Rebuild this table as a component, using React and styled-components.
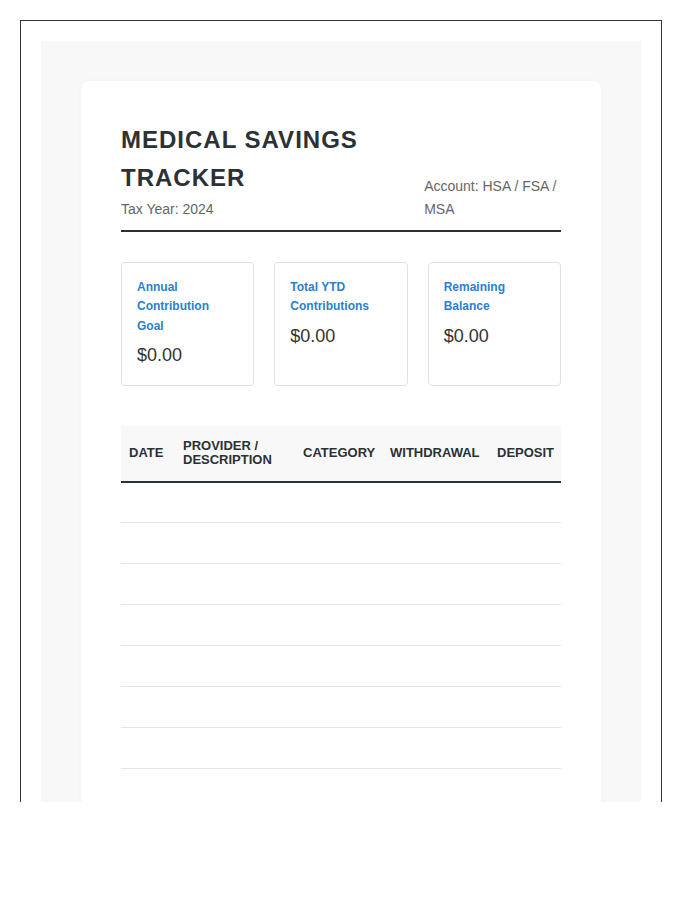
import React from "react";
import styled, { createGlobalStyle } from "styled-components";

const Global = createGlobalStyle`
  * { box-sizing: border-box; }
  body {
    margin: 0;
    background: #fff;
    font-family: "Liberation Sans", Arial, Helvetica, sans-serif;
    line-height: 1.6;
    color: #333;
  }
`;

const Frame = styled.div`
  margin: 20px 0 0 20px;
  width: 642px;
  height: 782px;
  border: 1px solid #333;
  border-bottom: none;
  overflow: hidden;
`;

const Backdrop = styled.div`
  margin: 20px;
  padding: 40px;
  background: #f8f8f8;
  min-height: 1000px;
`;

const Sheet = styled.div`
  background: #fff;
  border-radius: 8px;
  padding: 40px;
  box-shadow: 0 0 6px rgba(0, 0, 0, 0.03);
  min-height: 1000px;
`;

const Header = styled.header`
  display: flex;
  justify-content: space-between;
  align-items: flex-end;
  padding-bottom: 10px;
  border-bottom: 2px solid #2b3134;
  margin-bottom: 30px;
`;

const TitleBlock = styled.div``;

const Title = styled.h1`
  margin: 0;
  font-size: 24px;
  font-weight: 700;
  letter-spacing: 1px;
  text-transform: uppercase;
  color: #2b3134;
`;

const Meta = styled.div`
  font-size: 14px;
  color: #666;
`;

const Summary = styled.div`
  display: grid;
  grid-template-columns: repeat(3, 1fr);
  gap: 20px;
  margin-bottom: 40px;
`;

const StatCard = styled.div`
  border: 1px solid #e2e2e2;
  border-radius: 4px;
  padding: 15px;
`;

const StatLabel = styled.div`
  font-size: 12px;
  font-weight: 700;
  color: #2b7fd0;
`;

const StatValue = styled.div`
  margin-top: 5px;
  font-size: 18px;
  color: #333;
`;

const Table = styled.table`
  width: 100%;
  border-collapse: collapse;
  table-layout: fixed;
`;

const Th = styled.th`
  text-align: left;
  font-size: 13px;
  font-weight: 700;
  text-transform: uppercase;
  line-height: 14.4px;
  color: #2b3134;
  background: #f8f8f8;
  padding: 12px 8px;
  height: 56px;
  border-bottom: 2px solid #2b3134;
  vertical-align: middle;
`;

const Td = styled.td`
  height: 41px;
  padding: 0 8px;
  border-bottom: 1px solid #e5e5e5;
`;

const columns = [
  { label: "Date", width: 54 },
  { label: "Provider / Description", width: 120 },
  { label: "Category", width: 87 },
  { label: "Withdrawal", width: 107 },
  { label: "Deposit", width: 72 },
];

const stats = [
  { label: "Annual Contribution Goal", value: "$0.00" },
  { label: "Total YTD Contributions", value: "$0.00" },
  { label: "Remaining Balance", value: "$0.00" },
];

export default function App() {
  const rows = Array.from({ length: 10 });
  return (
    <>
      <Global />
      <Frame>
        <Backdrop>
          <Sheet>
            <Header>
              <TitleBlock>
                <Title>Medical Savings Tracker</Title>
                <Meta>Tax Year: 2024</Meta>
              </TitleBlock>
              <Meta>Account: HSA / FSA / MSA</Meta>
            </Header>
            <Summary>
              {stats.map((s) => (
                <StatCard key={s.label}>
                  <StatLabel>{s.label}</StatLabel>
                  <StatValue>{s.value}</StatValue>
                </StatCard>
              ))}
            </Summary>
            <Table>
              <colgroup>
                {columns.map((c) => (
                  <col key={c.label} style={{ width: c.width }} />
                ))}
              </colgroup>
              <thead>
                <tr>
                  {columns.map((c) => (
                    <Th key={c.label}>{c.label}</Th>
                  ))}
                </tr>
              </thead>
              <tbody>
                {rows.map((_, i) => (
                  <tr key={i}>
                    {columns.map((c) => (
                      <Td key={c.label} />
                    ))}
                  </tr>
                ))}
              </tbody>
            </Table>
          </Sheet>
        </Backdrop>
      </Frame>
    </>
  );
}
